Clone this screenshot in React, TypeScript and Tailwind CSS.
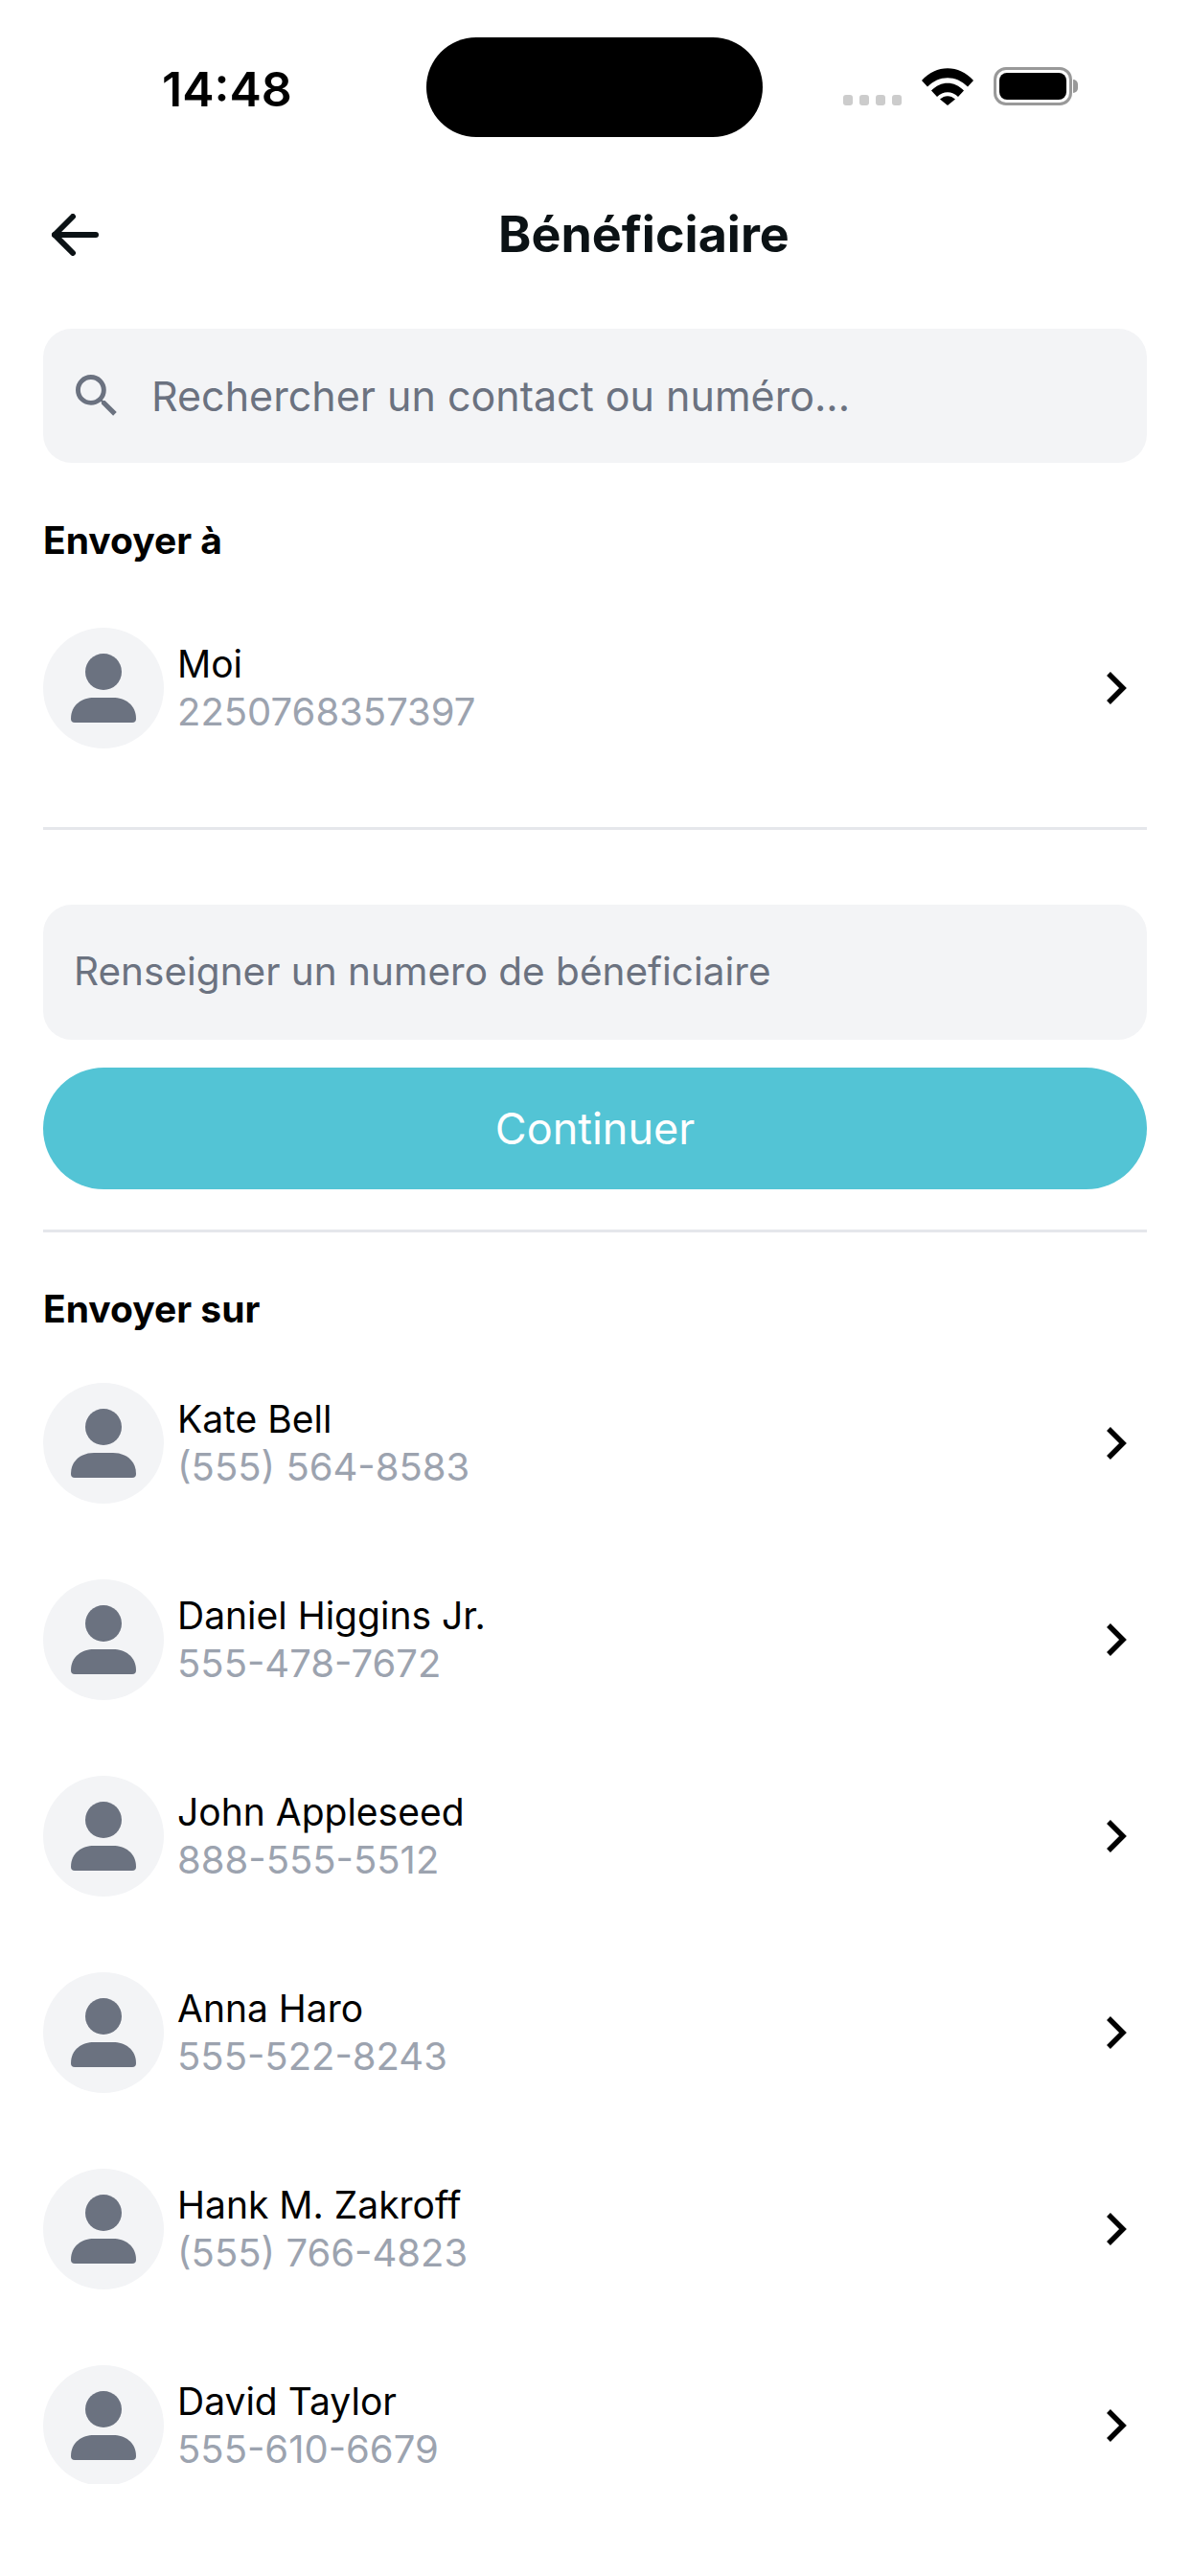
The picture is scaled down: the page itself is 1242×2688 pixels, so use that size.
import React from "react";

const contacts = [
  { name: "Kate Bell", phone: "(555) 564-8583" },
  { name: "Daniel Higgins Jr.", phone: "555-478-7672" },
  { name: "John Appleseed", phone: "888-555-5512" },
  { name: "Anna Haro", phone: "555-522-8243" },
  { name: "Hank M. Zakroff", phone: "(555) 766-4823" },
  { name: "David Taylor", phone: "555-610-6679" },
];

const ContactRow = ({ name, phone }: { name: string; phone: string }) => {
  return (
    <div className="flex items-center h-[126px] shrink-0">
      <div className="w-[126px] h-[126px] rounded-full bg-[#f3f4f6] flex items-center justify-center shrink-0">
        <svg width="68" height="72" viewBox="0 0 68 72" fill="#6b7280">
          <circle cx="34" cy="19" r="19" />
          <path d="M4 72 a4 4 0 0 1 -4 -4 C0 53 12 46 24 46 H44 C56 46 68 53 68 68 a4 4 0 0 1 -4 4 Z" />
        </svg>
      </div>
      <div className="ml-[14px] flex-1 flex flex-col">
        <span className="text-[39px] leading-[50px] text-black">{name}</span>
        <span className="text-[40px] leading-[50px] text-[#9ca3af]">{phone}</span>
      </div>
      <svg className="mr-[20px]" width="24" height="36" viewBox="0 0 24 36" fill="none" stroke="#000" strokeWidth="5.5">
        <path d="M4 3 L19 18 L4 33" />
      </svg>
    </div>
  );
};

const App = () => {
  return (
    <div className="w-[1242px] h-[2688px] bg-white overflow-hidden font-['Inter',sans-serif]">
      {/* status bar */}
      <div className="h-[143px] pt-[39px] flex items-start">
        <div className="w-[445px] pl-[169px] pt-[24px] text-[50px] leading-[60px] font-semibold text-black">14:48</div>
        <div className="w-[351px] h-[104px] rounded-full bg-black" />
        <div className="flex items-end pl-[84px] pt-[31px]">
          <div className="flex gap-[7px] mb-0">
            <span className="w-[10px] h-[11px] rounded-[3px] bg-[#cccccc]" />
            <span className="w-[10px] h-[11px] rounded-[3px] bg-[#cccccc]" />
            <span className="w-[10px] h-[11px] rounded-[3px] bg-[#cccccc]" />
            <span className="w-[10px] h-[11px] rounded-[3px] bg-[#cccccc]" />
          </div>
          <svg className="ml-[21px]" width="54" height="39" viewBox="0 0 54 39" fill="#000">
            <path d="M0 13 C15 -4 39 -4 54 13 L48 19.5 C36 7 18 7 6 19.5 Z" />
            <path d="M10 23.5 C20 13 34 13 44 23.5 L38 30 C32 23.5 22 23.5 16 30 Z" />
            <path d="M19 32.5 C24 28 30 28 35 32.5 L27 39 Z" />
          </svg>
          <div className="ml-[21px] w-[82px] h-[40px] rounded-[13px] border-[3px] border-[#999999] p-[3px]">
            <div className="w-full h-full rounded-[8px] bg-black" />
          </div>
          <div className="w-[5px] h-[14px] mb-[13px] ml-[1px] rounded-r-full bg-[#999999]" />
        </div>
      </div>

      {/* header */}
      <div className="h-[200px] flex items-start">
        <svg className="ml-[53px] mt-[80px]" width="50" height="44" viewBox="0 0 50 44" fill="none" stroke="#0b1215" strokeWidth="6" strokeLinecap="round" strokeLinejoin="round">
          <path d="M47 22 H4" />
          <path d="M23 3 L4 22 L23 41" />
        </svg>
        <h1 className="ml-[417px] mt-[72px] text-[52px] leading-[60px] font-bold text-[#0b1215]">Bénéficiaire</h1>
      </div>

      <div className="px-[45px] h-[2249px] overflow-hidden flex flex-col">
        {/* search */}
        <div className="h-[140px] rounded-[30px] bg-[#f3f4f6] flex items-center pl-[34px] shrink-0">
          <svg width="44" height="44" viewBox="3 3 18 18" fill="#6b7280">
            <path d="M15.5 14h-.79l-.28-.27A6.47 6.47 0 0 0 16 9.5 6.5 6.5 0 1 0 9.5 16c1.61 0 3.09-.59 4.23-1.57l.27.28v.79l5 4.99L20.49 19l-4.99-5zm-6 0C7.01 14 5 11.99 5 9.5S7.01 5 9.5 5 14 7.01 14 9.5 11.99 14 9.5 14z" />
          </svg>
          <span className="ml-[35px] text-[43px] text-[#6b7280]">Rechercher un contact ou numéro...</span>
        </div>

        <h2 className="mt-[59px] text-[39px] leading-[44px] font-bold text-black shrink-0">Envoyer à</h2>

        <div className="mt-[69px] shrink-0">
          <ContactRow name="Moi" phone="2250768357397" />
        </div>

        <div className="mt-[82px] h-[3px] bg-[#e5e7eb] shrink-0" />

        {/* beneficiary number */}
        <div className="mt-[78px] h-[141px] rounded-[30px] bg-[#f3f4f6] flex items-center pl-[32px] shrink-0">
          <span className="text-[40.5px] text-[#6b7280]">Renseigner un numero de béneficiaire</span>
        </div>

        <button className="mt-[29px] h-[127px] rounded-full bg-[#53c4d5] text-white text-[45px] shrink-0">Continuer</button>

        <div className="mt-[42px] h-[3px] bg-[#e5e7eb] shrink-0" />

        <h2 className="mt-[58px] text-[39px] leading-[44px] font-bold text-black shrink-0">Envoyer sur</h2>

        <div className="mt-[55px] flex flex-col gap-[79px]">
          {contacts.map((c) => (
            <ContactRow key={c.name} name={c.name} phone={c.phone} />
          ))}
        </div>
      </div>
    </div>
  );
};

export default App;
